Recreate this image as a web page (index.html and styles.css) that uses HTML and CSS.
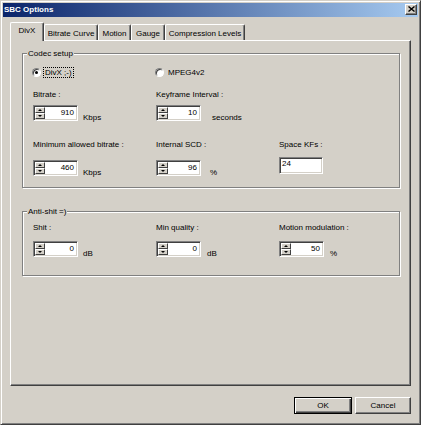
FILE: index.html
```html
<!DOCTYPE html>
<html>
<head>
<meta charset="utf-8">
<title>SBC Options</title>
<link rel="stylesheet" href="styles.css">
</head>
<body>
<div class="window">
  <div class="titlebar">
    <span class="title">SBC Options</span>
    <button class="close" aria-label="Close">
      <svg width="7" height="6" viewBox="0 0 7 6"><path d="M0.5 0.5 L6.5 5.5 M6.5 0.5 L0.5 5.5" stroke="#000" stroke-width="1.4" fill="none"/></svg>
    </button>
  </div>
  <div class="client">
    <div class="tabs">
      <div class="tab active t-divx">DivX</div>
      <div class="tab t-curve">Bitrate Curve</div>
      <div class="tab t-motion">Motion</div>
      <div class="tab t-gauge">Gauge</div>
      <div class="tab t-levels">Compression Levels</div>
    </div>
    <div class="panel">
      <div class="group codec">
        <span class="group-title">Codec setup</span>
        <div class="row row-radio">
          <label class="radio"><span class="radio-dot checked"></span><span class="radio-text focus">DivX ;-)</span></label>
          <label class="radio"><span class="radio-dot"></span><span class="radio-text">MPEG4v2</span></label>
        </div>
        <div class="row row-1">
          <div class="field">
            <div class="field-label">Bitrate :</div>
            <div class="control gap-5">
              <div class="spin"><div class="spin-btns"><span class="spin-btn up"></span><span class="spin-btn down"></span></div><div class="spin-value">910</div></div>
              <span class="unit u5">Kbps</span>
            </div>
          </div>
          <div class="field">
            <div class="field-label">Keyframe Interval :</div>
            <div class="control gap-5">
              <div class="spin"><div class="spin-btns"><span class="spin-btn up"></span><span class="spin-btn down"></span></div><div class="spin-value">10</div></div>
              <span class="unit u11">seconds</span>
            </div>
          </div>
        </div>
        <div class="row row-2">
          <div class="field">
            <div class="field-label">Minimum allowed bitrate :</div>
            <div class="control gap-10">
              <div class="spin"><div class="spin-btns"><span class="spin-btn up"></span><span class="spin-btn down"></span></div><div class="spin-value">460</div></div>
              <span class="unit u5">Kbps</span>
            </div>
          </div>
          <div class="field">
            <div class="field-label">Internal SCD :</div>
            <div class="control gap-10">
              <div class="spin"><div class="spin-btns"><span class="spin-btn up"></span><span class="spin-btn down"></span></div><div class="spin-value">96</div></div>
              <span class="unit u9">%</span>
            </div>
          </div>
          <div class="field">
            <div class="field-label">Space KFs :</div>
            <div class="control gap-7">
              <div class="edit"><div class="edit-value">24</div></div>
            </div>
          </div>
        </div>
      </div>
      <div class="group anti">
        <span class="group-title">Anti-shit =)</span>
        <div class="row row-anti">
          <div class="field">
            <div class="field-label">Shit :</div>
            <div class="control gap-8">
              <div class="spin"><div class="spin-btns"><span class="spin-btn up"></span><span class="spin-btn down"></span></div><div class="spin-value">0</div></div>
              <span class="unit u5">dB</span>
            </div>
          </div>
          <div class="field">
            <div class="field-label">Min quality :</div>
            <div class="control gap-8">
              <div class="spin"><div class="spin-btns"><span class="spin-btn up"></span><span class="spin-btn down"></span></div><div class="spin-value">0</div></div>
              <span class="unit u6">dB</span>
            </div>
          </div>
          <div class="field">
            <div class="field-label">Motion modulation :</div>
            <div class="control gap-8">
              <div class="spin"><div class="spin-btns"><span class="spin-btn up"></span><span class="spin-btn down"></span></div><div class="spin-value">50</div></div>
              <span class="unit u6">%</span>
            </div>
          </div>
        </div>
      </div>
    </div>
    <div class="buttons">
      <button class="btn btn-ok">OK</button>
      <button class="btn btn-cancel">Cancel</button>
    </div>
  </div>
</div>
</body>
</html>
```

FILE: styles.css
```css
html, body {
  margin: 0;
  padding: 0;
  background: #d4d0c8;
}

body {
  font-family: "Liberation Sans", Arial, sans-serif;
  font-size: 8px;
  color: #000;
}

.window {
  width: 421px;
  height: 425px;
  box-sizing: border-box;
  border: 1px solid;
  border-color: #d4d0c8 #404040 #404040 #d4d0c8;
  box-shadow: inset 1px 1px 0 #fff, inset -1px -1px 0 #808080;
  padding: 2px;
  background: #d4d0c8;
  display: flex;
  flex-direction: column;
}

/* Title bar */
.titlebar {
  height: 14px;
  flex: none;
  display: flex;
  align-items: flex-start;
  background: linear-gradient(to right, #0a246a, #a6caf0);
  padding-left: 1px;
}

.title {
  color: #fff;
  font-weight: bold;
  line-height: 14px;
}

.close {
  margin: 1px 1px 0 auto;
  width: 12px;
  height: 11px;
  box-sizing: border-box;
  padding: 0;
  border: 1px solid;
  border-color: #fff #404040 #404040 #fff;
  box-shadow: inset -1px -1px 0 #808080;
  background: #d4d0c8;
  display: flex;
  align-items: center;
  justify-content: center;
}

.close svg {
  display: block;
  margin-top: -1px;
}

/* Client area */
.client {
  flex: 1;
  display: flex;
  flex-direction: column;
  padding: 0 7px 8px;
}

.tabs {
  margin-top: 5px;
  height: 18px;
  flex: none;
  display: flex;
  align-items: flex-end;
}

.tab {
  box-sizing: border-box;
  height: 16px;
  border-top: 1px solid #fff;
  border-left: 1px solid #fff;
  border-right: 1px solid #404040;
  box-shadow: inset -1px 0 0 #808080;
  border-radius: 2px 2px 0 0;
  background: #d4d0c8;
  text-align: center;
  line-height: 10px;
  padding-top: 4px;
  white-space: nowrap;
}

.tab.active {
  height: 19px;
  padding-top: 3px;
  margin-bottom: -1px;
  position: relative;
  z-index: 1;
}

.t-divx { width: 34px; }
.t-curve { width: 54px; }
.t-motion { width: 33px; }
.t-gauge { width: 34px; }
.t-levels { width: 80px; }

.panel {
  flex: 1;
  box-sizing: border-box;
  border: 1px solid;
  border-color: #fff #404040 #404040 #fff;
  box-shadow: inset -1px -1px 0 #808080;
  padding: 0 0 0 11px;
}

/* Group boxes */
.group {
  position: relative;
  box-sizing: border-box;
  width: 378px;
  border: 1px solid #808080;
  box-shadow: 1px 1px 0 #fff, inset 1px 1px 0 #fff;
  padding: 0 0 0 10px;
}

.codec {
  margin-top: 12px;
  padding-bottom: 11px;
}

.anti {
  margin-top: 23px;
  padding-bottom: 18px;
}

.group-title {
  position: absolute;
  top: -6px;
  left: 4px;
  padding: 0 1px;
  line-height: 11px;
  background: #d4d0c8;
  white-space: nowrap;
}

.row {
  display: grid;
  grid-template-columns: 123px 123px 123px;
  align-items: start;
}

.row-radio {
  margin-top: 13px;
  height: 11px;
}

.row-1 { margin-top: 12px; }
.row-2 { margin-top: 19px; }
.row-anti { margin-top: 11px; }

/* Radio buttons */
.radio {
  display: flex;
  align-items: center;
  height: 11px;
  margin-left: -1px;
}

.radio-dot {
  width: 9px;
  height: 9px;
  box-sizing: border-box;
  border-radius: 50%;
  border: 1px solid;
  border-color: #808080 #fff #fff #808080;
  box-shadow: inset 1px 1px 0 #404040;
  background: #fff;
  display: flex;
  align-items: center;
  justify-content: center;
  flex: none;
}

.radio-dot.checked::after {
  content: "";
  width: 3px;
  height: 3px;
  border-radius: 50%;
  background: #000;
}

.radio-text {
  margin-left: 2px;
  padding: 0 1px;
  border: 1px dotted transparent;
  line-height: 9px;
  white-space: nowrap;
}

.radio-text.focus {
  border-color: #000;
}

/* Fields */
.field {
  display: flex;
  flex-direction: column;
}

.field-label {
  line-height: 10px;
  white-space: nowrap;
}

.control {
  display: flex;
  align-items: flex-end;
}

.gap-5 { margin-top: 5px; }
.gap-7 { margin-top: 7px; }
.gap-8 { margin-top: 8px; }
.gap-10 { margin-top: 10px; }

.spin {
  width: 45px;
  height: 16px;
  box-sizing: border-box;
  border: 1px solid;
  border-color: #808080 #fff #fff #808080;
  box-shadow: inset 1px 1px 0 #404040, inset -1px -1px 0 #d4d0c8;
  padding: 1px;
  display: flex;
}

.spin-btns {
  width: 10px;
  display: flex;
  flex-direction: column;
  flex: none;
}

.spin-btn {
  flex: 1;
  box-sizing: border-box;
  border: 1px solid;
  border-color: #fff #404040 #404040 #fff;
  background: #d4d0c8;
  display: flex;
  align-items: center;
  justify-content: center;
}

.spin-btn::before {
  content: "";
  width: 0;
  height: 0;
  border-left: 2px solid transparent;
  border-right: 2px solid transparent;
}

.spin-btn.up::before {
  border-bottom: 2px solid #000;
}

.spin-btn.down::before {
  border-top: 2px solid #000;
}

.spin-value {
  flex: 1;
  background: #fff;
  text-align: right;
  padding-right: 2px;
  line-height: 12px;
}

.edit {
  width: 44px;
  height: 17px;
  box-sizing: border-box;
  border: 1px solid;
  border-color: #808080 #fff #fff #808080;
  box-shadow: inset 1px 1px 0 #404040, inset -1px -1px 0 #d4d0c8;
  padding: 1px;
  display: flex;
}

.edit-value {
  flex: 1;
  background: #fff;
  line-height: 10px;
  padding-left: 1px;
}

.unit {
  line-height: 8px;
  margin-bottom: -1px;
  white-space: nowrap;
}

.u5 { margin-left: 5px; }
.u6 { margin-left: 6px; }
.u9 { margin-left: 9px; }
.u11 { margin-left: 11px; }

/* Dialog buttons */
.buttons {
  margin-top: 11px;
  display: flex;
  justify-content: flex-end;
  gap: 3px;
  flex: none;
}

.btn {
  height: 17px;
  box-sizing: border-box;
  margin: 0;
  padding: 0;
  font-family: "Liberation Sans", Arial, sans-serif;
  font-size: 8px;
  line-height: 10px;
  color: #000;
  background: #d4d0c8;
  border: 1px solid;
  border-color: #fff #404040 #404040 #fff;
  box-shadow: inset -1px -1px 0 #808080;
}

.btn-ok {
  width: 58px;
  border-color: #000;
  box-shadow: inset 1px 1px 0 #fff, inset -1px -1px 0 #404040, inset -2px -2px 0 #808080;
}

.btn-cancel {
  width: 56px;
}
```
